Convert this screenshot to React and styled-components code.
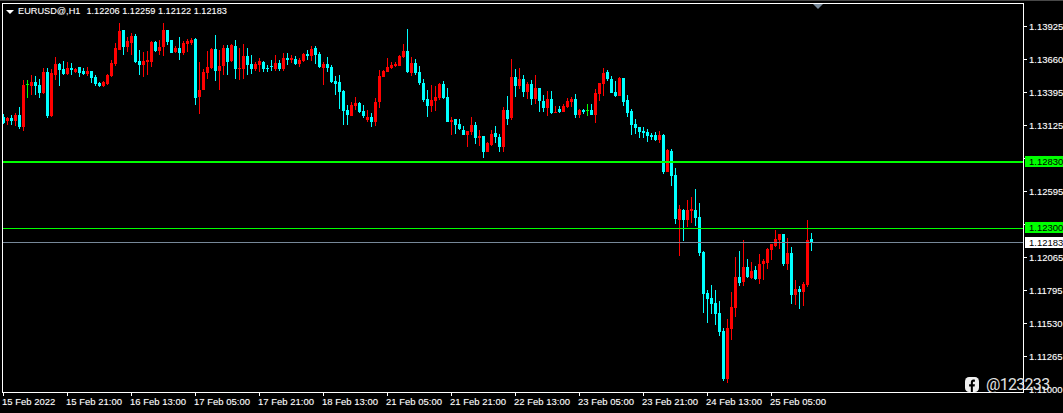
import styled, { createGlobalStyle } from 'styled-components';

const GlobalStyle = createGlobalStyle`
  html, body {
    margin: 0;
    background: #000;
  }
`;

const Page = styled.div`
  position: relative;
  width: 1063px;
  height: 413px;
  overflow: hidden;
  background: #000;
  color: #fff;
  font-family: 'Liberation Sans', Arial, sans-serif;
  font-size: 9.5px;
  line-height: 11px;
  text-shadow: 0 0 1px rgba(255, 255, 255, 0.35);
`;

const TopEdge = styled.div`
  height: 1px;
  margin-bottom: 2px;
  background: #484848;
`;

const Workspace = styled.div`
  display: grid;
  grid-template-columns: 1022px 1fr;
  grid-template-rows: 390px auto;
  padding-left: 2px;
`;

const Plot = styled.div`
  position: relative;
  box-sizing: border-box;
  border: 1px solid #fff;
`;

const ChartSvg = styled.svg`
  display: block;
`;

const Legend = styled.div`
  position: absolute;
  top: 2px;
  left: 3px;
  display: flex;
  align-items: center;
  font-size: 9.2px;
  white-space: nowrap;
`;

const LegendArrow = styled.span`
  width: 0;
  height: 0;
  margin-right: 4px;
  border-left: 4px solid transparent;
  border-right: 4px solid transparent;
  border-top: 4px solid #fff;
`;

const LegendPrices = styled.span`
  margin-left: 6px;
`;

const ShiftMarker = styled.span`
  position: absolute;
  top: 0;
  left: 810px;
  width: 0;
  height: 0;
  border-left: 5px solid transparent;
  border-right: 5px solid transparent;
  border-top: 5px solid #778899;
`;

const PriceAxis = styled.div`
  position: relative;
  grid-row: 1 / span 2;
  grid-column: 2;
  padding-top: 7px;
`;

const PriceRow = styled.div`
  display: flex;
  align-items: center;
  gap: 2px;
  height: 33px;
`;

const Tick = styled.span`
  flex: none;
  width: ${(props) => (props.$vertical ? '1px' : '3px')};
  height: ${(props) => (props.$vertical ? '3px' : '1px')};
  background: #fff;
`;

const PriceTag = styled.div`
  position: absolute;
  left: 1px;
  right: 0;
  top: ${(props) => props.$top}px;
  height: 11px;
  padding-left: 4px;
  background: ${(props) => props.$bg};
  color: #000;
  text-shadow: none;
`;

const TimeAxis = styled.div`
  display: flex;
  padding-left: 1px;
`;

const TimeCell = styled.div`
  display: flex;
  flex: none;
  flex-direction: column;
  width: 64px;
`;

const TimeLabel = styled.span`
  margin-left: -1px;
  white-space: nowrap;
`;

const Watermark = styled.div`
  position: absolute;
  top: 377px;
  left: 965px;
  display: flex;
  align-items: center;
  gap: 7px;
  color: #e2e2e2;
  font-family: Roboto, sans-serif;
  font-size: 16px;
  font-weight: 400;
  letter-spacing: -0.7px;
  line-height: 15px;
  text-shadow: none;
`;

const RED = '#ff0000';
const CYAN = '#00ffff';
const LIME = '#00ff00';
const colors = { r: RED, c: CYAN, g: LIME };

// candles read off the reference at 3x: colour, high, body top, body bottom, low
const section = (offset, rows) =>
  rows.map(([color, high, top, bottom, low]) => ({
    color,
    high: Math.round((high + offset) / 3),
    top: Math.round((top + offset) / 3),
    bottom: Math.round((bottom + offset) / 3),
    low: Math.round((low + offset) / 3),
  }));

const candles = [
  ...section(0, [
    ['c', 342, 352, 370, 372], ['r', 350, 354, 364, 375], ['c', 345, 353, 363, 375],
    ['r', 338, 346, 362, 378], ['c', 322, 345, 382, 388], ['r', 240, 255, 381, 392],
    ['g', 240, 253, 256, 293], ['r', 225, 246, 258, 285], ['c', 228, 246, 258, 285],
    ['c', 238, 255, 279, 294], ['r', 203, 216, 279, 282], ['c', 205, 216, 347, 353],
    ['r', 208, 220, 348, 350], ['r', 171, 192, 225, 240], ['c', 190, 192, 210, 257],
    ['c', 183, 207, 222, 225], ['r', 186, 204, 222, 225], ['c', 190, 204, 210, 225],
    ['r', 203, 207, 216, 220], ['c', 200, 201, 218, 231], ['c', 204, 213, 222, 225],
    ['r', 200, 213, 222, 228], ['c', 212, 213, 234, 249], ['c', 225, 231, 252, 258],
    ['c', 246, 249, 258, 261], ['r', 243, 246, 258, 260], ['r', 222, 225, 252, 255],
    ['r', 180, 189, 228, 232], ['r', 130, 144, 192, 197], ['r', 69, 93, 150, 151],
    ['c', 90, 90, 141, 165], ['r', 112, 123, 141, 156], ['r', 100, 108, 129, 165],
    ['c', 102, 108, 186, 190], ['c', 150, 183, 195, 225], ['r', 156, 183, 195, 231],
    ['r', 153, 180, 186, 225], ['r', 123, 126, 186, 200], ['c', 123, 126, 153, 156],
    ['r', 120, 141, 153, 165], ['r', 69, 90, 141, 168], ['c', 90, 90, 126, 135],
    ['c', 120, 120, 159, 159], ['r', 138, 144, 156, 159], ['c', 112, 144, 159, 180],
    ['r', 123, 129, 159, 165], ['r', 117, 123, 132, 156], ['r', 114, 120, 129, 135],
    ['c', 114, 117, 294, 315], ['r', 186, 270, 291, 342], ['r', 207, 216, 270, 270],
    ['r', 153, 201, 219, 237], ['r', 145, 147, 204, 207], ['c', 105, 147, 213, 243],
    ['r', 150, 198, 213, 270], ['r', 135, 144, 198, 225], ['c', 135, 144, 186, 225],
    ['r', 132, 135, 183, 186], ['c', 120, 138, 207, 237], ['r', 144, 204, 207, 240],
    ['r', 132, 168, 207, 237], ['c', 144, 168, 195, 225], ['c', 165, 192, 207, 222],
    ['r', 186, 192, 207, 213], ['r', 174, 183, 195, 216], ['c', 183, 186, 207, 216],
    ['c', 195, 204, 207, 216],
  ]),
  ...section(60, [
    ['c', 120, 138, 141, 153], ['r', 105, 129, 147, 153], ['c', 120, 129, 147, 153],
    ['r', 99, 114, 147, 153], ['c', 99, 114, 120, 135], ['r', 105, 114, 120, 129],
    ['c', 108, 117, 132, 135], ['r', 114, 120, 132, 141], ['r', 99, 102, 123, 126],
    ['c', 90, 102, 108, 120], ['r', 78, 87, 108, 123], ['c', 78, 84, 105, 132],
    ['c', 96, 102, 141, 144], ['r', 126, 132, 144, 195], ['c', 111, 132, 144, 156],
    ['c', 135, 141, 186, 189], ['c', 168, 183, 192, 225], ['c', 165, 186, 216, 267],
    ['c', 210, 213, 273, 315], ['c', 255, 270, 285, 315], ['r', 246, 255, 288, 288],
    ['r', 231, 249, 258, 270], ['c', 246, 249, 276, 279], ['c', 255, 273, 288, 294],
    ['r', 270, 291, 300, 306], ['c', 279, 291, 306, 321], ['r', 234, 246, 306, 318],
    ['r', 150, 168, 246, 264], ['r', 150, 153, 171, 171], ['r', 114, 141, 156, 156],
    ['r', 126, 135, 144, 147], ['r', 126, 132, 138, 141], ['r', 105, 108, 138, 138],
    ['r', 72, 93, 111, 114], ['c', 27, 93, 156, 159], ['r', 111, 129, 159, 168],
    ['c', 117, 129, 159, 165], ['c', 138, 156, 189, 195], ['c', 177, 189, 240, 246],
    ['c', 210, 237, 258, 291], ['r', 195, 240, 258, 276], ['r', 198, 231, 243, 273],
    ['r', 189, 192, 234, 240], ['c', 183, 192, 234, 237], ['c', 204, 231, 306, 306],
    ['r', 291, 300, 306, 345], ['c', 297, 297, 315, 342], ['c', 297, 312, 327, 330],
    ['c', 318, 330, 345, 345], ['r', 333, 333, 345, 381], ['r', 291, 315, 336, 345],
    ['c', 306, 315, 354, 372], ['r', 330, 348, 354, 378], ['c', 348, 348, 396, 414],
    ['r', 366, 369, 396, 396], ['r', 330, 342, 375, 378], ['c', 318, 339, 351, 369],
    ['c', 342, 351, 381, 396], ['r', 261, 270, 381, 396], ['c', 228, 270, 297, 315],
    ['r', 117, 171, 294, 300], ['c', 147, 171, 198, 231], ['r', 144, 177, 198, 207],
    ['c', 165, 177, 216, 231], ['r', 186, 192, 216, 237], ['c', 180, 192, 237, 255],
    ['r', 165, 204, 237, 252],
  ]),
  ...section(150, [
    ['c', 114, 114, 153, 186], ['c', 135, 153, 174, 186], ['r', 123, 147, 174, 198],
    ['c', 123, 147, 189, 192], ['r', 168, 186, 189, 189], ['c', 168, 177, 186, 189],
    ['r', 162, 168, 186, 186], ['r', 144, 153, 171, 174], ['r', 141, 147, 156, 171],
    ['c', 132, 147, 195, 204], ['r', 177, 180, 195, 204], ['c', 177, 180, 186, 192],
    ['g', 162, 180, 182, 198], ['c', 162, 180, 195, 195], ['r', 117, 129, 195, 219],
    ['r', 99, 99, 132, 153], ['r', 54, 69, 102, 138], ['c', 60, 66, 87, 93],
    ['c', 78, 87, 129, 129], ['c', 93, 126, 138, 141], ['r', 81, 84, 138, 138],
    ['c', 84, 84, 156, 168], ['c', 135, 150, 189, 201], ['c', 177, 183, 225, 255],
    ['c', 207, 222, 234, 252], ['c', 231, 231, 246, 264], ['c', 231, 243, 249, 264],
    ['c', 237, 246, 258, 276], ['c', 249, 255, 261, 270], ['c', 246, 255, 270, 273],
    ['r', 243, 255, 270, 279], ['c', 252, 255, 366, 372], ['r', 297, 300, 366, 366],
    ['c', 297, 303, 378, 408],
  ]),
  ...section(540, [
    ['c', -36, -15, 117, 132], ['r', 75, 87, 120, 228], ['c', 87, 90, 120, 183],
    ['r', 60, 90, 120, 141], ['r', 51, 87, 93, 129], ['c', 27, 90, 114, 138],
    ['c', 69, 111, 219, 228], ['c', 213, 216, 342, 399], ['c', 330, 339, 357, 429],
    ['c', 315, 354, 372, 402], ['c', 330, 369, 402, 435], ['c', 363, 399, 456, 468],
    ['c', 444, 453, 597, 603], ['r', 417, 444, 597, 609], ['r', 336, 381, 447, 480],
    ['r', 231, 291, 384, 411], ['c', 213, 291, 309, 318], ['r', 180, 261, 306, 318],
    ['c', 237, 261, 291, 294], ['r', 246, 273, 294, 297], ['c', 258, 270, 297, 300],
    ['r', 222, 252, 297, 312], ['r', 237, 243, 252, 300], ['r', 204, 207, 249, 267],
    ['r', 192, 192, 210, 240], ['r', 150, 177, 198, 201], ['r', 162, 162, 180, 207],
    ['c', 162, 162, 252, 258], ['r', 174, 219, 252, 270], ['c', 201, 219, 345, 372],
    ['r', 300, 327, 345, 375], ['c', 318, 327, 336, 387], ['r', 306, 312, 336, 378],
    ['r', 120, 180, 315, 321], ['c', 159, 177, 189, 213],
  ]),
];

const levels = [
  { y: 161, height: 2, color: LIME },
  { y: 228, height: 1, color: LIME },
  { y: 242, height: 1, color: '#778899' },
];

const priceLabels = [
  '1.13925', '1.13660', '1.13395', '1.13125', '1.12860', '1.12595',
  '1.12330', '1.12065', '1.11795', '1.11530', '1.11265', '1.11000',
];

const priceTags = [
  { label: '1.12830', top: 153, bg: LIME },
  { label: '1.12300', top: 219, bg: LIME },
  { label: '1.12183', top: 234, bg: '#fff' },
];

const timeLabels = [
  '15 Feb 2022', '15 Feb 21:00', '16 Feb 13:00', '17 Feb 05:00', '17 Feb 21:00',
  '18 Feb 13:00', '21 Feb 05:00', '21 Feb 21:00', '22 Feb 13:00', '23 Feb 05:00',
  '23 Feb 21:00', '24 Feb 13:00', '25 Feb 05:00',
];

const Candle = ({ index, color, high, top, bottom, low }) => {
  const x = 3 + index * 4;
  return (
    <g fill={colors[color]}>
      <rect x={x} y={high} width="1" height={Math.max(1, low - high)} />
      <rect x={x - 1} y={top} width="3" height={Math.max(1, bottom - top)} />
    </g>
  );
};

const FacebookIcon = () => (
  <svg width="14" height="15" viewBox="0 0 24 24" preserveAspectRatio="none">
    <rect width="24" height="24" rx="7" fill="#f0f0f0" />
    <path
      fill="#000"
      d="M13.5 24v-9h3l.5-3.5h-3.5V9.3c0-1 .4-1.8 1.9-1.8H17V4.3C16.6 4.2 15.5 4 14.3 4 11.7 4 10 5.6 10 8.6v2.9H7V15h3v9z"
    />
  </svg>
);

const App = () => (
  <Page>
    <GlobalStyle />
    <TopEdge />
    <Workspace>
      <Plot>
        <ChartSvg width="1020" height="388" viewBox="3 4 1020 388" shapeRendering="crispEdges">
          {candles.map((candle, index) => (
            <Candle key={index} index={index} {...candle} />
          ))}
          {levels.map((level) => (
            <rect key={level.y} x="3" y={level.y} width="1020" height={level.height} fill={level.color} />
          ))}
        </ChartSvg>
        <Legend>
          <LegendArrow />
          <span>EURUSD@,H1</span>
          <LegendPrices>1.12206 1.12259 1.12122 1.12183</LegendPrices>
        </Legend>
        <ShiftMarker />
      </Plot>
      <PriceAxis>
        {priceLabels.map((label) => (
          <PriceRow key={label}>
            <Tick />
            <span>{label}</span>
          </PriceRow>
        ))}
        {priceTags.map((tag) => (
          <PriceTag key={tag.label} $top={tag.top} $bg={tag.bg}>
            {tag.label}
          </PriceTag>
        ))}
      </PriceAxis>
      <TimeAxis>
        {timeLabels.map((label) => (
          <TimeCell key={label}>
            <Tick $vertical />
            <TimeLabel>{label}</TimeLabel>
          </TimeCell>
        ))}
      </TimeAxis>
    </Workspace>
    <Watermark>
      <FacebookIcon />
      <span>@123233</span>
    </Watermark>
  </Page>
);

export default App;
